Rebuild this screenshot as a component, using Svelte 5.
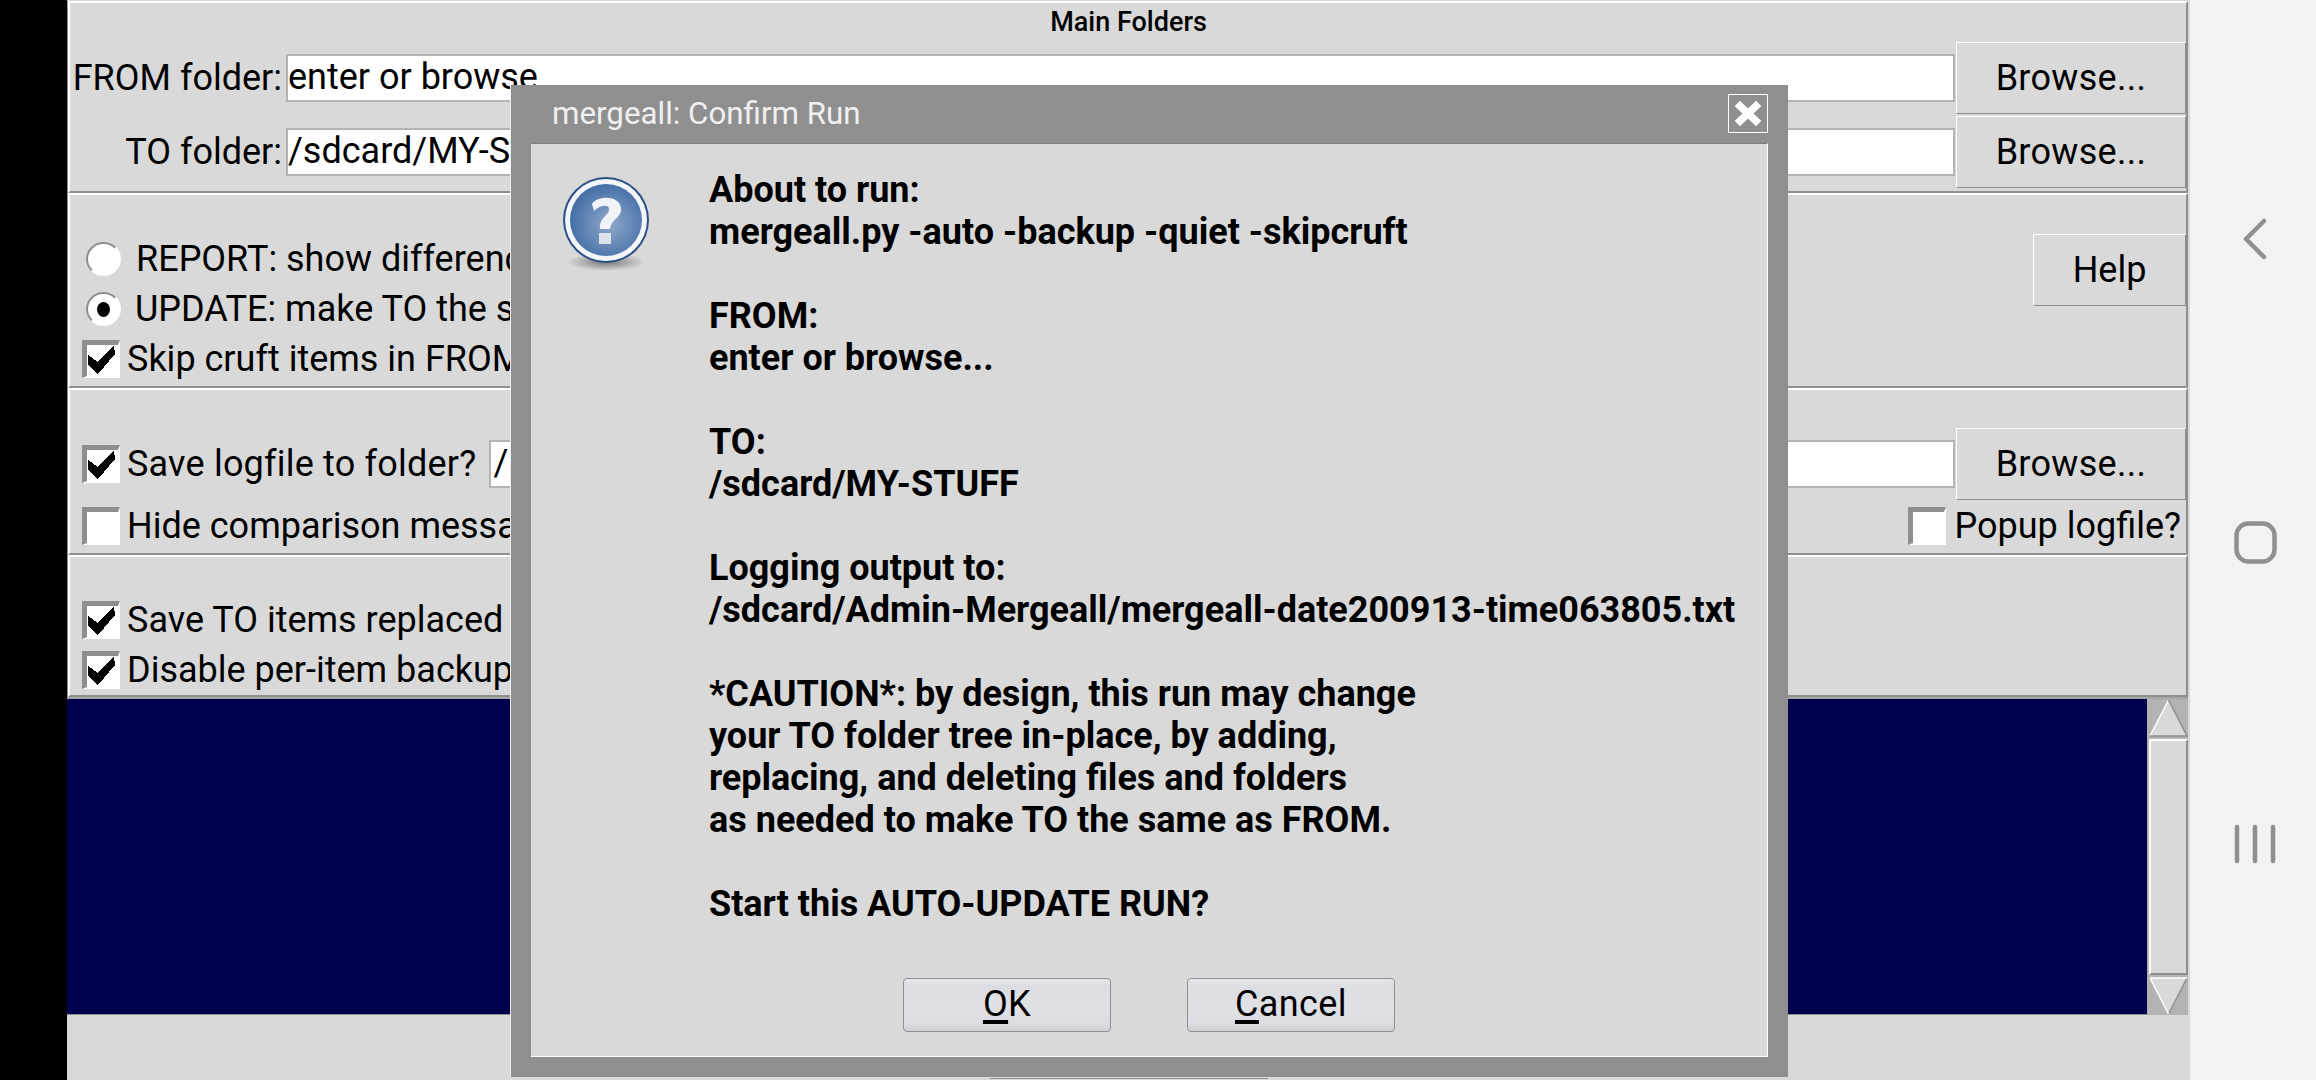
<script>
  const body = `About to run:
mergeall.py -auto -backup -quiet -skipcruft

FROM:
enter or browse...

TO:
/sdcard/MY-STUFF

Logging output to:
/sdcard/Admin-Mergeall/mergeall-date200913-time063805.txt

*CAUTION*: by design, this run may change
your TO folder tree in-place, by adding,
replacing, and deleting files and folders
as needed to make TO the same as FROM.

Start this AUTO-UPDATE RUN?`;
</script>

{#snippet check(on)}
  <span class="check">
    {#if on}
      <svg viewBox="0 0 38 38" width="38" height="38" shape-rendering="crispEdges"><polygon points="6,15 16,22 32,5 33,14 16,34 6,25" fill="#000" /></svg>
    {/if}
  </span>
{/snippet}

{#snippet radio(on)}
  <span class="radio">{#if on}<span class="dot"></span>{/if}</span>
{/snippet}

<div class="screen">
  <div class="black"></div>
  <div class="main">
    <section class="s1">
      <div class="title">Main Folders</div>
      <div class="frow">
        <span class="flabel">FROM folder:</span>
        <span class="entry">enter or browse...</span>
        <button class="tk browse">Browse...</button>
      </div>
      <div class="frow">
        <span class="flabel">TO folder:</span>
        <span class="entry">/sdcard/MY-STUFF</span>
        <button class="tk browse">Browse...</button>
      </div>
    </section>

    <section class="s2">
      <div class="opts">
        <div class="rrow first">{@render radio(false)}<span class="rl1">REPORT: show differences only</span></div>
        <div class="rrow second">{@render radio(true)}<span class="rl2">UPDATE: make TO the same as FROM</span></div>
        <div class="crow third">{@render check(true)}<span>Skip cruft items in FROM</span></div>
      </div>
      <button class="tk help">Help</button>
    </section>

    <section class="s3">
      <div class="logrow">
        {@render check(true)}
        <span class="loglabel">Save logfile to folder?</span>
        <span class="entry">/sdcard/Admin-Mergeall</span>
        <button class="tk browse">Browse...</button>
      </div>
      <div class="hiderow">
        <div class="crow">{@render check(false)}<span>Hide comparison messages</span></div>
        <div class="crow popup">{@render check(false)}<span>Popup logfile?</span></div>
      </div>
    </section>

    <section class="s4">
      <div class="crow">{@render check(true)}<span>Save TO items replaced or deleted</span></div>
      <div class="crow">{@render check(true)}<span>Disable per-item backups</span></div>
    </section>

    <div class="console">
      <div class="text"></div>
      <div class="scroll">
        <svg class="arrow" viewBox="0 0 39 38" width="39" height="38">
          <polygon points="19.5,1 38,37 1,37" fill="#d9d9d9" />
          <path d="M1 37 L19.5 1" stroke="#fff" stroke-width="1.5" fill="none" />
          <path d="M19.5 1 L38 37 L1 37" stroke="#8f8f8f" stroke-width="1.5" fill="none" />
        </svg>
        <div class="slider"></div>
        <svg class="arrow" viewBox="0 0 39 38" width="39" height="38">
          <polygon points="1,1 38,1 19.5,37" fill="#d9d9d9" />
          <path d="M19.5 37 L38 1" stroke="#8f8f8f" stroke-width="1.5" fill="none" />
          <path d="M1 1 L38 1 M1 1 L19.5 37" stroke="#fff" stroke-width="1.5" fill="none" />
        </svg>
      </div>
    </div>

    <div class="foot"><div class="footbtn"></div></div>
  </div>

  <nav class="nav">
    <svg width="24" height="42" viewBox="0 0 24 42"><path d="M21 3 L3 21 L21 39" fill="none" stroke="#8f8f8f" stroke-width="4.5" stroke-linecap="round" stroke-linejoin="round" /></svg>
    <svg width="43" height="43" viewBox="0 0 43 43"><rect x="2.5" y="2.5" width="38" height="38" rx="12" fill="none" stroke="#8f8f8f" stroke-width="4.5" /></svg>
    <svg width="42" height="40" viewBox="0 0 42 40"><path d="M3 3 V37 M21 3 V37 M39 3 V37" fill="none" stroke="#8f8f8f" stroke-width="4.5" stroke-linecap="round" /></svg>
  </nav>

  <div class="dialog">
    <div class="dtitle">
      <span>mergeall: Confirm Run</span>
      <span class="close">
        <svg viewBox="0 0 38 37" width="38" height="37"><path d="M11 11 L27 26 M27 11 L11 26" stroke="#fff" stroke-width="7.5" stroke-linecap="square" fill="none" /></svg>
      </span>
    </div>
    <div class="dbody">
      <div class="msg">
        <svg class="qicon" viewBox="0 0 90 96" width="90" height="96">
          <defs>
            <radialGradient id="qg" cx="0.55" cy="0.55" r="0.6">
              <stop offset="0" stop-color="#8fa9cc" />
              <stop offset="1" stop-color="#3f6aa3" />
            </radialGradient>
            <radialGradient id="qs" cx="0.5" cy="0.5" r="0.5">
              <stop offset="0" stop-color="#555" stop-opacity="0.75" />
              <stop offset="1" stop-color="#555" stop-opacity="0" />
            </radialGradient>
          </defs>
          <ellipse cx="45" cy="86" rx="39" ry="9" fill="url(#qs)" />
          <circle cx="45" cy="44" r="43" fill="#2b4f86" />
          <circle cx="45" cy="44" r="41" fill="#f3f6fb" />
          <circle cx="45" cy="44" r="36" fill="url(#qg)" />
          <path d="M31 28 C35 20 58 18 60 32 C61 42 50 43 49 53 L39 53 C38 41 48 40 48 33 C48 28 39 29 33 35 Z" fill="#f0f3f8" />
          <rect x="38" y="57" width="12" height="11" fill="#dde2ea" />
        </svg>
        <div class="msgtext">{body}</div>
      </div>
      <div class="dbtns">
        <button class="gbtn"><u>O</u>K</button>
        <button class="gbtn"><u>C</u>ancel</button>
      </div>
    </div>
  </div>
</div>

<style>
  :global(body) { margin: 0; background: #000; }
  * { box-sizing: border-box; }
  .screen {
    position: relative;
    width: 2316px;
    height: 1080px;
    display: flex;
    overflow: hidden;
    font-family: Roboto, "Liberation Sans", sans-serif;
    font-size: 36px;
    line-height: 42px;
    color: #000;
    background: #000;
  }
  .black { width: 67px; background: #000; flex: none; }
  .main { width: 2123px; flex: none; display: flex; flex-direction: column; background: #d9d9d9; }
  .nav {
    flex: 1;
    background: #f2f2f2;
    display: flex;
    flex-direction: column;
    align-items: center;
    padding: 218px 0 216px 4px;
    justify-content: space-between;
  }
  section {
    flex: none;
    width: 2120px;
    margin-left: 1px;
    border: 2px solid;
    border-color: #fff #8f8f8f #8f8f8f #fff;
    background: #d9d9d9;
    box-shadow: -1px 0 0 #8f8f8f;
  }
  .s1 { height: 192px; margin-top: 1px; padding: 39px 0 0 0; position: relative; }
  .title {
    position: absolute;
    top: 3px; left: 0; right: 0;
    text-align: center;
    font-weight: 500;
    font-size: 27px;
    line-height: 32px;
    padding-left: 1px;
  }
  .frow { display: flex; align-items: center; height: 72px; margin-bottom: 2px; }
  .flabel { width: 212px; flex: none; text-align: right; white-space: nowrap; }
  .entry {
    flex: 1;
    height: 48px;
    margin-left: 4px;
    background: #fff;
    border: 2px solid #b3b3b3;
    line-height: 42px;
    padding-left: 0;
    white-space: nowrap;
    overflow: hidden;
  }
  .tk {
    font: inherit;
    color: #000;
    background: #d9d9d9;
    border: 1px solid;
    border-color: #fff #8f8f8f #8f8f8f #fff;
    padding: 0;
    margin: 0;
  }
  .browse { width: 230px; height: 72px; flex: none; margin-left: 1px; letter-spacing: 0.3px; }

  .s2 { height: 195px; display: flex; justify-content: space-between; padding: 0 0 0 12px; }
  .opts { display: flex; flex-direction: column; }
  .rrow { display: flex; align-items: center; height: 34px; white-space: nowrap; }
  .first { margin-top: 47px; margin-left: 4px; }
  .second { margin-top: 16px; margin-left: 4px; }
  .third { margin-top: 14px; }
  .rl1 { margin-left: 15px; }
  .rl2 { margin-left: 14px; }
  .radio {
    width: 35px; height: 34px;
    border-radius: 50%;
    background: #fff;
    border: 2px solid;
    border-color: #8f8f8f #fff #fff #8f8f8f;
    display: flex;
    align-items: center;
    justify-content: center;
    flex: none;
  }
  .dot { width: 13px; height: 15px; border-radius: 50%; background: #000; }
  .crow { display: flex; align-items: center; gap: 7px; white-space: nowrap; height: 38px; }
  .check {
    width: 38px; height: 38px;
    flex: none;
    display: block;
    background: #fff;
    border-style: solid;
    border-width: 5px 2px 2px 5px;
    border-color: #8f8f8f #fff #fff #8f8f8f;
    position: relative;
  }
  .check svg { position: absolute; left: -5px; top: -5px; }
  .help { width: 153px; height: 72px; margin-top: 39px; }

  .s3 { height: 167px; padding-left: 12px; }
  .logrow { display: flex; align-items: center; height: 72px; margin-top: 38px; }
  .loglabel { margin-left: 7px; white-space: nowrap; letter-spacing: 0.2px; }
  .logrow .entry { margin-left: 13px; padding-left: 2px; }
  .hiderow { display: flex; justify-content: space-between; margin-top: 7px; }
  .popup { padding-right: 5px; gap: 8px; }

  .s4 { height: 142px; padding: 44px 0 0 12px; display: flex; flex-direction: column; gap: 12px; }

  .console { height: 318px; display: flex; flex: none; width: 2121px; border-top: 2px solid #a6a6a6; }
  .text { width: 2082px; background: #00004f; border-right: 2px solid #b3b3b3; border-bottom: 1px solid #8f8f8f; flex: none; }
  .scroll {
    flex: 1;
    background: #b3b3b3;
    display: flex;
    flex-direction: column;
    gap: 2px;
    align-items: stretch;
  }
  .arrow { flex: none; display: block; }
  .slider {
    flex: 1;
    background: #d9d9d9;
    border: 2px solid;
    border-color: #fff #8f8f8f #8f8f8f #fff;
  }
  .foot { flex: 1; display: flex; justify-content: center; padding-top: 63px; }
  .footbtn { width: 278px; height: 1px; background: #8f8f8f; }

  .dialog {
    position: absolute;
    left: 510px;
    top: 85px;
    width: 1278px;
    height: 992px;
    background: #8f8f8f;
    border-left: 1px solid #eee;
    display: flex;
    flex-direction: column;
    padding: 0 20px 20px 20px;
  }
  .dtitle {
    height: 58px;
    flex: none;
    display: flex;
    align-items: center;
    justify-content: space-between;
    color: #f0f0f0;
    font-size: 31.3px;
    padding-left: 21px;
  }
  .close {
    width: 40px; height: 39px;
    border: 1px solid #fff;
    display: flex;
    align-items: center;
    justify-content: center;
    margin-top: -2px;
  }
  .close svg { flex: none; }
  .dbody {
    flex: 1;
    background: #d9d9d9;
    border-top: 1px solid #808080;
    border-right: 1px solid #fff;
    border-bottom: 1px solid #fff;
    display: flex;
    flex-direction: column;
    justify-content: space-between;
    padding: 25px 0 24px 0;
  }
  .msg { display: flex; align-items: flex-start; }
  .qicon { flex: none; margin: 7px 0 0 30px; }
  .msgtext {
    margin-left: 58px;
    white-space: pre-line;
    font-weight: 700;
    font-size: 36px;
    line-height: 42px;
  }
  .dbtns { display: flex; justify-content: center; gap: 76px; }
  .gbtn {
    width: 208px;
    height: 54px;
    font: inherit;
    font-size: 36px;
    line-height: 48px;
    letter-spacing: 0.4px;
    color: #000;
    padding: 0 0 2px;
    border: 1px solid #8f8f8f;
    border-radius: 4px;
    background: linear-gradient(#e6e7ea, #dcdde2 15%, #e0e1e5 50%, #dcdde2 85%, #cfd0d5);
  }
  u { text-decoration-thickness: 4px; text-underline-offset: 4px; }
</style>
